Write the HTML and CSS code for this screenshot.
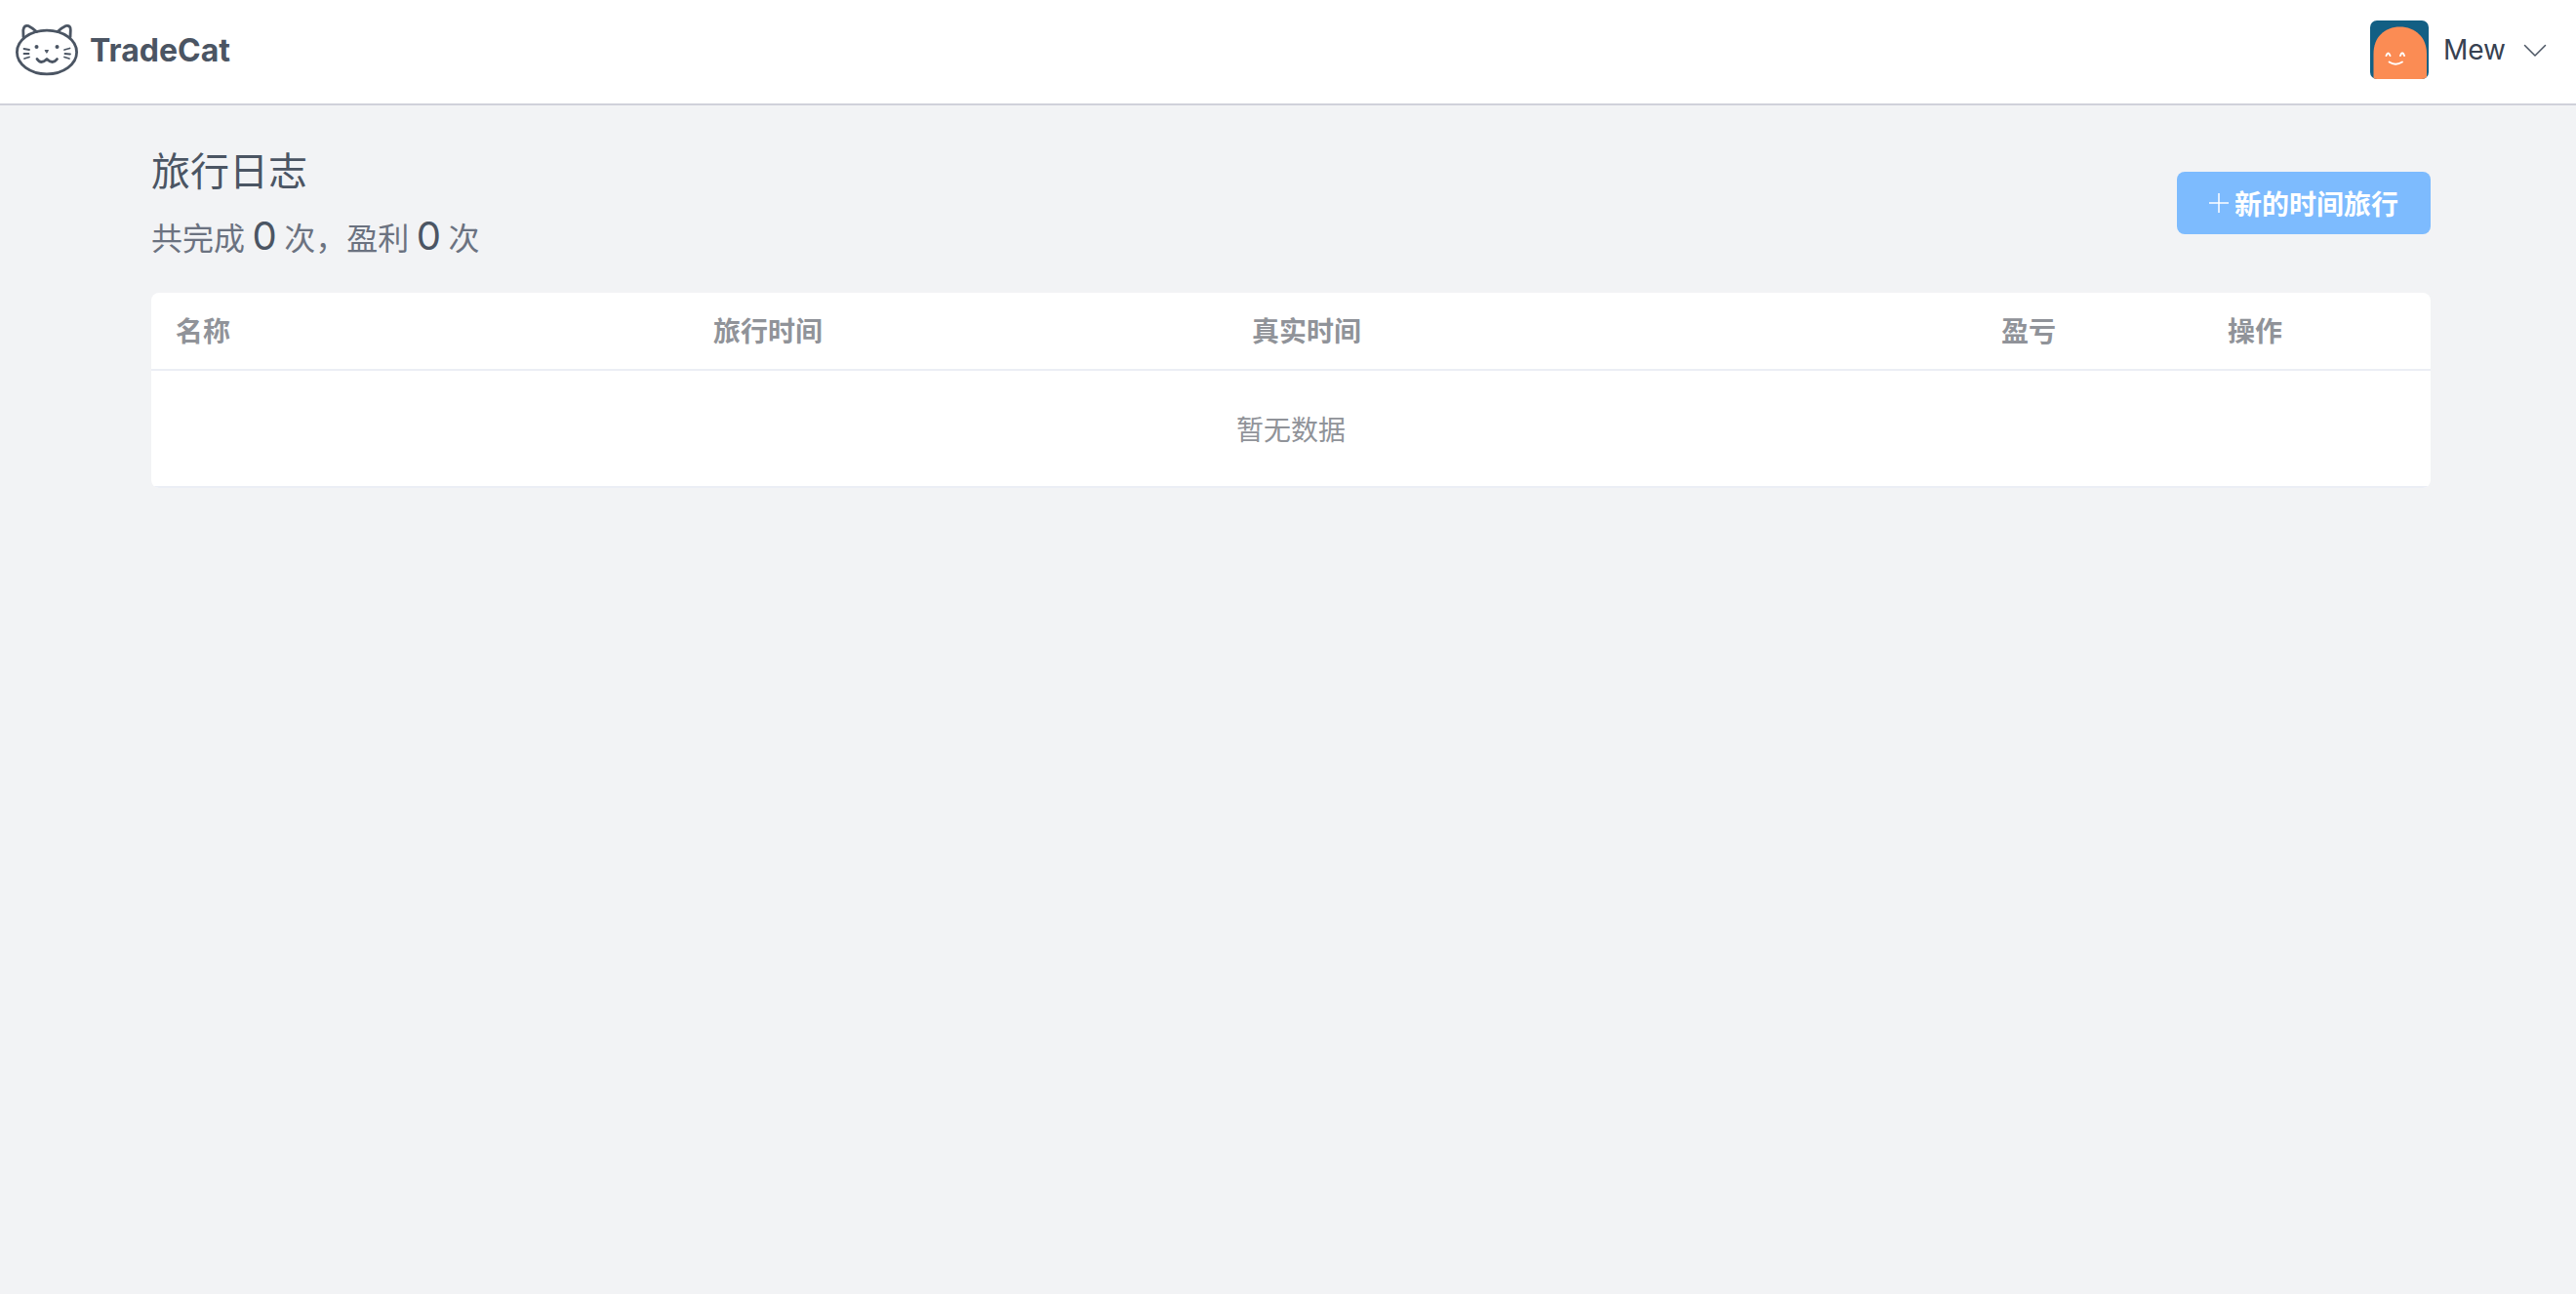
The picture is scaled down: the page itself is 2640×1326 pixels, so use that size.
FILE: index.html
```html
<!DOCTYPE html>
<html lang="zh-CN">
<head>
<meta charset="utf-8">
<title>TradeCat</title>
<link rel="stylesheet" href="styles.css">
</head>
<body>
<header class="topbar">
  <div class="brand">
    <svg class="logo" viewBox="14 23 68 56" fill="none" stroke="#4b5563" stroke-width="2.800" stroke-linecap="round" stroke-linejoin="round">
      <ellipse cx="48" cy="53.500" rx="30.600" ry="22.300"/>
      <path d="M24 38 L23.800 31 Q24.500 25.500 29 26.500 Q33 28.500 37.500 32.500"/>
      <path d="M59 32.500 Q63 28.500 67.500 26.500 Q72.500 25.500 72.300 31 L72 38"/>
      <circle cx="37.500" cy="48" r="2" fill="#4b5563" stroke="none"/>
      <circle cx="58.500" cy="48" r="2" fill="#4b5563" stroke="none"/>
      <path d="M46.500 51.500 L49.500 51.500 L48 54 Z" fill="#4b5563" stroke-width="1"/>
      <path d="M38 60.500 Q42 66.500 48 60.500 Q54 66.500 58.500 60.500"/>
      <path d="M24.500 50 L30 51 M24.500 55 L29.500 55 M25 60 L30 58.500" stroke-width="1.800"/>
      <path d="M66 51 L71.500 49.500 M66.500 55 L72 55.500 M66 58.500 L71 60" stroke-width="1.800"/>
    </svg>
    <span class="brand-name">TradeCat</span>
  </div>
  <div class="user">
    <svg class="avatar" viewBox="0 0 60 60">
      <rect width="60" height="60" fill="#125f84"/>
      <path d="M3.500 60 L3.500 34 C3.500 17 15 6.500 30.500 6.500 C46 6.500 58 17 58 34 L58 60 Z" fill="#fb8c54"/>
      <path d="M16.500 36 Q18.500 31 20.500 36 M31 36 Q33 30.500 35 36" fill="none" stroke="#fff" stroke-width="2" stroke-linecap="round"/>
      <path d="M19.500 42.500 Q26 47 33 42.500" fill="none" stroke="#fff" stroke-width="1.800" stroke-linecap="round"/>
    </svg>
    <span class="user-name">Mew</span>
    <svg class="chevron" viewBox="0 0 24 14" fill="none" stroke="#4b5563" stroke-width="1.500" stroke-linecap="round" stroke-linejoin="round">
      <path d="M1.500 1.500 L12 12 L22.500 1.500"/>
    </svg>
  </div>
</header>
<main class="content">
  <section class="intro">
    <div class="intro-text">
      <h1 class="title">旅行日志</h1>
      <p class="summary">共完成 <span class="num">0</span> 次，盈利 <span class="num">0</span> 次</p>
    </div>
    <button class="new-btn" type="button"><svg class="plus" viewBox="0 0 20 20" stroke="#fff" stroke-width="1.500"><path d="M10 0 V20 M0 10 H20"/></svg>新的时间旅行</button>
  </section>
  <section class="table">
    <div class="row head">
      <div class="cell">名称</div>
      <div class="cell">旅行时间</div>
      <div class="cell">真实时间</div>
      <div class="cell">盈亏</div>
      <div class="cell">操作</div>
    </div>
    <div class="empty">暂无数据</div>
  </section>
</main>
</body>
</html>
```
FILE: styles.css
```css
* { box-sizing: border-box; }
html, body { margin: 0; height: 100%; }
body {
  background: #f2f3f5;
  font-family: Inter, "Noto Sans CJK SC", sans-serif;
  color: #4b5563;
}
.topbar {
  height: 108px;
  background: #fff;
  border-bottom: 2px solid #d0d1da;
  display: flex;
  align-items: center;
  justify-content: space-between;
  padding: 0 30px 4px 14px;
}
.brand { display: flex; align-items: center; gap: 10px; }
.logo { width: 68px; height: 56px; display: block; }
.brand-name { font-size: 32px; font-weight: 700; color: #4b5563; }
.user { display: flex; align-items: center; }
.avatar { width: 60px; height: 60px; border-radius: 7px; display: block; }
.user-name { font-size: 28px; color: #374151; margin-left: 15px; }
.chevron { width: 24px; height: 14px; margin-left: 18px; display: block; margin-top: 2px; }
.content { padding: 38px 149px 0 155px; }
.intro { display: flex; justify-content: space-between; align-items: center; margin-bottom: 20px; }
.intro-text { display: flex; flex-direction: column; }
.title { margin: 0; font-size: 40px; font-weight: 400; line-height: 60px; color: #4b5563; }
.summary { margin: 0; font-size: 32px; line-height: 72px; height: 74px; color: #6b7280; word-spacing: -1.500px; }
.num { font-size: 40px; color: #4b5563; }
.new-btn {
  width: 260px;
  height: 64px;
  margin-bottom: 10px;
  border: 0;
  border-radius: 8px;
  background: #7dbbfe;
  color: #fff;
  font: 700 28px Inter, "Noto Sans CJK SC", sans-serif;
  display: flex;
  align-items: center;
  justify-content: center;
  gap: 6px;
  padding: 0;
}
.plus { width: 20px; height: 20px; display: block; }
.table { background: #fff; border-radius: 8px; overflow: hidden; }
.row { display: grid; grid-template-columns: 551px 552px 768px 232px 233px; }
.head { height: 80px; border-bottom: 2px solid #ebeef5; align-items: center; }
.cell { padding: 0 0 3px 25px; font-size: 28px; font-weight: 700; color: #909399; }
.empty { height: 120px; border-bottom: 2px solid #ebeef5; display: flex; align-items: center; justify-content: center; font-size: 28px; color: #909399; }
```
